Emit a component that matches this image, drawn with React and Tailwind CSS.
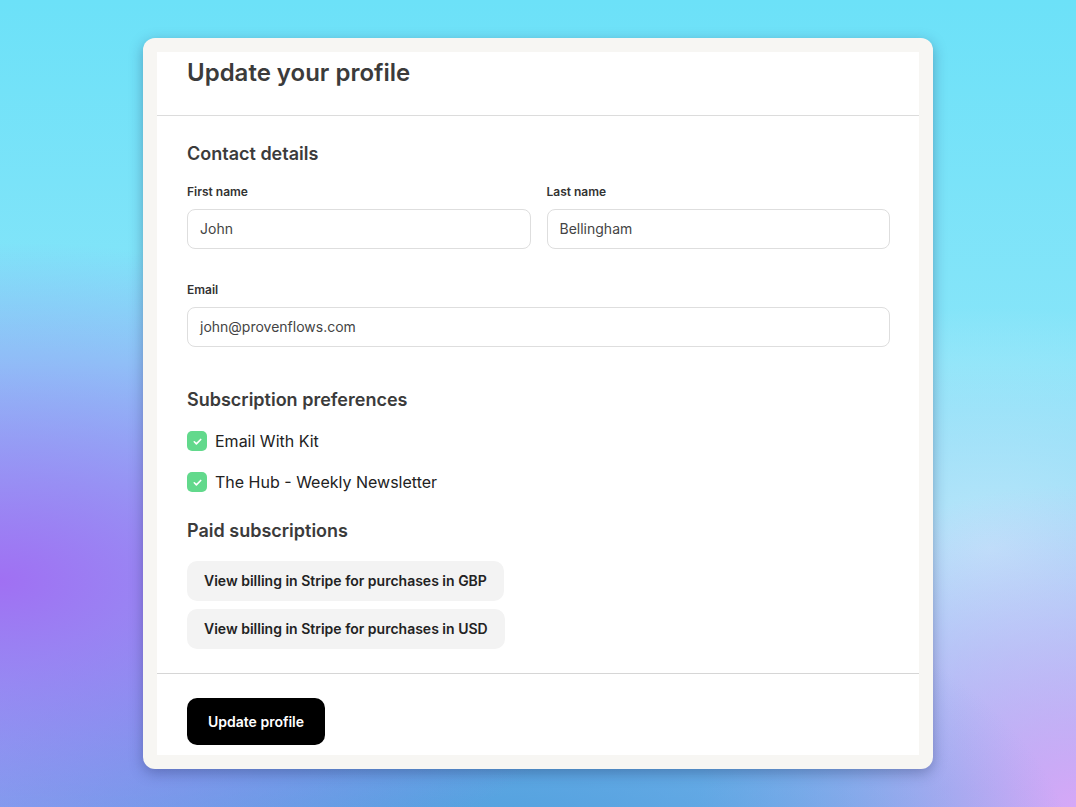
import React from "react";

const Check = () => (
  <span className="w-5 h-5 rounded-[5px] bg-[#62d98c] flex items-center justify-center shrink-0">
    <svg width="11" height="11" viewBox="0 0 12 12" fill="none">
      <path
        d="M2.5 6.3l2.3 2.2L9.5 3.8"
        stroke="white"
        strokeWidth="1.8"
        strokeLinecap="round"
        strokeLinejoin="round"
      />
    </svg>
  </span>
);

const Field = ({ label, value, className = "" }) => (
  <div className={`flex flex-col ${className}`}>
    <label className="text-xs font-semibold text-[#333] leading-4">{label}</label>
    <div className="mt-[9px] h-10 rounded-lg border border-[#dedede] px-3 flex items-center text-sm text-[#444]">
      {value}
    </div>
  </div>
);

export default function App() {
  return (
    <div
      className="min-h-screen w-full flex justify-center pt-[38px] font-['Inter',sans-serif] bg-[radial-gradient(60%_42%_at_0%_72%,#a070f3_0%,#a070f380_50%,transparent_100%),radial-gradient(55%_40%_at_45%_108%,#4c9fdc_0%,transparent_100%),radial-gradient(35%_40%_at_100%_100%,#d6a8f7_0%,transparent_100%),radial-gradient(35%_30%_at_92%_68%,#bbe7fa_0%,transparent_100%),linear-gradient(180deg,#6ce1f8_0%,#88e5f9_45%,#7db2ee_100%)]"
    >
      <div className="w-[790px] h-[731px] bg-[#f7f6f3] rounded-[12px] p-[14px] shadow-[0_4px_14px_rgba(30,40,90,0.35)]">
        <div className="bg-white h-full flex flex-col">
          {/* header */}
          <div className="px-[30px] pt-[5px] pb-[26px] border-b border-[#dcdcdc]">
            <h1 className="text-2xl leading-8 font-semibold text-[#3b3b3b]">Update your profile</h1>
          </div>

          {/* body */}
          <div className="pl-[30px] pr-[29px] pt-[24px] pb-[24px] border-b border-[#d6d6d6]">
            <h2 className="text-lg leading-7 font-semibold text-[#3b3b3b]">Contact details</h2>
            <div className="mt-4 grid grid-cols-2 gap-4">
              <Field label="First name" value="John" />
              <Field label="Last name" value="Bellingham" />
            </div>
            <Field label="Email" value="john@provenflows.com" className="mt-[33px]" />

            <h2 className="mt-[39px] text-lg leading-7 font-semibold text-[#3b3b3b]">
              Subscription preferences
            </h2>
            <div className="mt-[15px] flex flex-col gap-[17px]">
              <div className="flex items-center gap-2 h-6">
                <Check />
                <span className="text-base text-[#222]">Email With Kit</span>
              </div>
              <div className="flex items-center gap-2 h-6">
                <Check />
                <span className="text-base text-[#222]">The Hub - Weekly Newsletter</span>
              </div>
            </div>

            <h2 className="mt-[23px] text-lg leading-7 font-semibold text-[#3b3b3b]">Paid subscriptions</h2>
            <div className="mt-4 flex flex-col items-start gap-2">
              <button className="h-10 px-[17px] rounded-[10px] bg-[#f3f3f3] text-sm font-semibold text-[#222]">
                View billing in Stripe for purchases in GBP
              </button>
              <button className="h-10 px-[17px] rounded-[10px] bg-[#f3f3f3] text-sm font-semibold text-[#222]">
                View billing in Stripe for purchases in USD
              </button>
            </div>
          </div>

          {/* footer */}
          <div className="px-[30px] pt-6">
            <button className="h-[47px] px-[21px] rounded-[10px] bg-black text-white text-sm font-semibold">
              Update profile
            </button>
          </div>
        </div>
      </div>
    </div>
  );
}
